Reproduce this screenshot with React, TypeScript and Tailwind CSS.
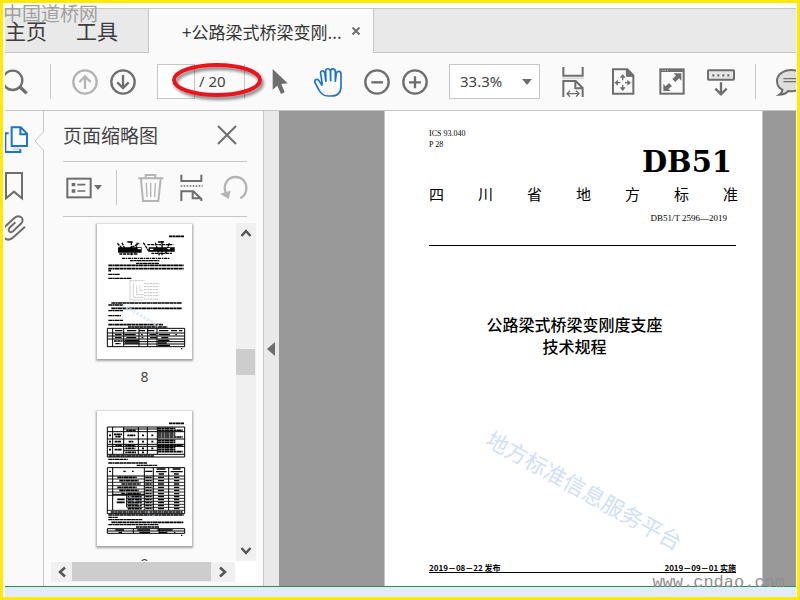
import type { ReactNode } from "react";

type IconProps = { box: string; className: string; children: ReactNode; stroke?: string };

function Icon({ box, className, children, stroke = "#6e6e6e" }: IconProps) {
  return (
    <svg viewBox={box} className={`block shrink-0 ${className}`} fill="none" stroke={stroke} strokeWidth={7} aria-hidden="true">
      {children}
    </svg>
  );
}

function ToolButton({ label, className = "", children }: { label: string; className?: string; children: ReactNode }) {
  return (
    <button type="button" aria-label={label} className={`shrink-0 ${className}`}>
      {children}
    </button>
  );
}

function TabBar() {
  return (
    <nav className="flex h-[45px] shrink-0 border-t border-[#c6c6c6] bg-[#e9e9e9] leading-none">
      <div className="flex w-36 shrink-0 gap-[29px] overflow-hidden whitespace-nowrap border-r border-b border-[#c6c6c6] text-[21px] text-[#3c3c3c]">
        <button type="button">主页</button>
        <button type="button">工具</button>
      </div>
      <div className="flex w-56 shrink-0 items-center justify-between bg-[#fafafa] pr-3 pl-[33px] text-[#333]">
        <button type="button" className="whitespace-nowrap text-[17px]">+公路梁式桥梁变刚...</button>
        <ToolButton label="关闭标签">
          <Icon box="0 0 10 10" className="size-[10px]">
            <path d="M1.5 1.5 8.500 8.500M8.500 1.500 1.500 8.500" strokeWidth={2} />
          </Icon>
        </ToolButton>
      </div>
      <div className="flex-1 border-b border-l border-[#c6c6c6]" />
    </nav>
  );
}

function Divider({ className = "" }: { className?: string }) {
  return <span className={`h-[35px] w-px shrink-0 bg-[#c6c6c6] ${className}`} />;
}

function Toolbar() {
  return (
    <div className="flex h-[58px] shrink-0 items-center overflow-hidden border-b border-[#c6c6c6] bg-[#fafafa]">
      <ToolButton label="查找">
        <Icon box="15 204 72 78" className="h-[26px] w-6">
          <circle cx="38" cy="238" r="29" />
          <path d="M60 258 80 277" strokeWidth={10} />
        </Icon>
      </ToolButton>
      <Divider className="ml-[21px]" />
      <ToolButton label="上一页" className="ml-[21px]">
        <Icon box="216 204 78 78" className="size-[26px]" stroke="#b4b4b4">
          <circle cx="255" cy="243" r="35" />
          <path d="M255 264V227M238 243 255 226 272 243" />
        </Icon>
      </ToolButton>
      <ToolButton label="下一页" className="ml-3">
        <Icon box="330 204 78 78" className="size-[26px]">
          <circle cx="369" cy="243" r="35" />
          <path d="M369 222V260M352 244 369 261 386 244" />
        </Icon>
      </ToolButton>
      <div className="relative ml-[21px] flex w-[88px] shrink-0 items-center border-r border-[#c6c6c6]">
        <input id="page-number" aria-label="页码" className="h-[35px] w-[38px] border border-[#c6c6c6] bg-white text-center outline-none" />
        <label htmlFor="page-number" className="ml-1 font-['Noto_Sans','Open_Sans',sans-serif] text-[15px] whitespace-nowrap text-[#444]">
          / 20
        </label>
        <svg viewBox="0 0 100 42" className="pointer-events-none absolute -top-1 left-3 h-[42px] w-[100px]" fill="none" aria-hidden="true">
          <defs>
            <filter id="ring-shadow" x="-10%" y="-20%" width="125%" height="160%">
              <feDropShadow dx="2" dy="3" stdDeviation="1.500" floodColor="#000" floodOpacity="0.450" />
            </filter>
          </defs>
          <ellipse cx="48" cy="20" rx="43" ry="15" stroke="#e8191f" strokeWidth="4" filter="url(#ring-shadow)" />
        </svg>
      </div>
      <ToolButton label="选择" className="ml-[27px]">
        <Icon box="36 204 48 78" className="h-[26px] w-4">
          <path d="M38 204 83 247 64 249 74 274 63 279 52 254 38 266Z" fill="#6e6e6e" stroke="none" />
        </Icon>
      </ToolButton>
      <ToolButton label="手形工具" className="ml-[26px]">
        <Icon box="162 198 84 90" className="h-[30px] w-7" stroke="#1f74c9">
          <path
            d="M187 251 182 218C180 208 192 207 194 216L198 243M198 240 197 210C197 201 210 201 211 210L212 241M212 239V210C213 201 225 202 226 211L226 243M226 240 229 217C231 208 243 210 243 219V255C243 274 233 285 215 285H205C188 285 182 277 177 267L165 245C162 236 172 231 177 239L187 254"
            strokeWidth={5}
            strokeLinejoin="round"
          />
        </Icon>
      </ToolButton>
      <ToolButton label="缩小" className="ml-[22px]">
        <Icon box="311 202 78 78" className="size-[26px]">
          <circle cx="350" cy="241" r="35" />
          <path d="M333 242H368" />
        </Icon>
      </ToolButton>
      <ToolButton label="放大" className="ml-3">
        <Icon box="425 202 78 78" className="size-[26px]">
          <circle cx="464" cy="241" r="35" />
          <path d="M446 242H482M464 224V260" />
        </Icon>
      </ToolButton>
      <div className="relative ml-[21px] shrink-0">
        <select aria-label="缩放比例" className="block h-[35px] w-[91px] appearance-none border border-[#c6c6c6] bg-white pl-[10px] font-['Noto_Sans','Open_Sans',sans-serif] text-[15px] text-[#444] outline-none">
          <option>33.3%</option>
        </select>
        <svg viewBox="0 0 10 6" className="pointer-events-none absolute top-[15px] right-2 h-[6px] w-[10px]" aria-hidden="true">
          <path d="M0 0H10L5 6Z" fill="#6e6e6e" />
        </svg>
      </div>
      <ToolButton label="适合宽度" className="ml-[19px]">
        <Icon box="88 198 84 90" className="h-[30px] w-7">
          <path d="M97 232H163" stroke="#d8d8d8" strokeWidth={5} />
          <path d="M101 198V224H159V198M101 288V240H138L159 261V288M137 240V262H159" strokeWidth={6} />
          <path d="M113 278H147M121 269 112 278 121 287M139 269 148 278 139 287" strokeWidth={4} />
        </Icon>
      </ToolButton>
      <ToolButton label="适合页面" className="ml-[22px]">
        <Icon box="237 198 84 90" className="h-[30px] w-7">
          <path d="M249 205H292L310 223V278H249Z" strokeWidth={6} />
          <path d="M289 205V226H310Z" fill="#6e6e6e" strokeWidth={3} />
          <path d="M278 224V238M278 251V266M258 245H271M285 245H299" strokeWidth={4} />
          <path d="M278 219 287 230H269ZM278 270 287 259H269ZM253 245 264 236V254ZM303 245 292 236V254Z" fill="#6e6e6e" stroke="none" />
        </Icon>
      </ToolButton>
      <ToolButton label="全屏模式" className="ml-[21px]">
        <Icon box="384 198 84 90" className="h-[30px] w-7">
          <rect x="391" y="205" width="70" height="73" strokeWidth={6} />
          <path d="M391 209H461" strokeWidth={8} />
          <path d="M397 208H415" stroke="#ccc" strokeWidth={3} strokeDasharray="3 4" />
          <path d="M454 217V239L447 232 436 243 427 234 438 224 431 217ZM400 270V249L407 256 417 246 426 255 415 264 422 270Z" fill="#6e6e6e" stroke="none" />
        </Icon>
      </ToolButton>
      <ToolButton label="显示键盘" className="ml-[21px]">
        <Icon box="531 198 84 90" className="h-[30px] w-7">
          <rect x="534" y="208" width="78" height="28" rx="2" strokeWidth={6} fill="#e6e6e6" />
          <path d="M547 223H600" strokeDasharray="6 9" strokeWidth={7} />
          <path d="M573 244V278M556 263 573 280 590 263" />
        </Icon>
      </ToolButton>
      <Divider className="ml-5" />
      <ToolButton label="注释" className="ml-5">
        <Icon box="738 198 63 90" className="h-[30px] w-[21px]">
          <path d="M785 207C758 207 741 222 741 240C741 252 747 261 757 266C757 273 753 278 748 281C760 281 769 277 775 270C805 274 828 260 828 240C828 220 808 207 785 207Z" fill="#dedede" strokeWidth={6} />
          <path d="M760 233H800M760 242H800" strokeWidth={4} />
        </Icon>
      </ToolButton>
    </div>
  );
}

function Rail() {
  return (
    <aside className="relative flex w-[39px] shrink-0 flex-col items-start border-r border-[#c6c6c6] bg-[#fafafa] pt-3">
      <ToolButton label="页面缩略图">
        <Icon box="15 40 72 96" className="h-8 w-6" stroke="#1f74c9">
          <path d="M38 113H58V122H38Z" fill="#c9dff3" stroke="none" />
          <path d="M35 53H62L81 72V109H35ZM61 53V74H81M15 71H26M16 71V127H61V118" strokeWidth={6} />
        </Icon>
      </ToolButton>
      <ToolButton label="书签" className="mt-4">
        <Icon box="15 180 72 90" className="h-[30px] w-6">
          <path d="M18 186H66V262L42 242 18 262Z" strokeWidth={6} />
        </Icon>
      </ToolButton>
      <ToolButton label="附件" className="mt-[14px]">
        <Icon box="15 165 72 84" className="h-7 w-6">
          <path d="M13 202 43 174C57 161 76 176 64 190L39 214C30 221 22 211 29 203L46 187M75 200 41 231C31 241 20 240 12 233" strokeWidth={6} />
        </Icon>
      </ToolButton>
      <svg viewBox="0 0 10 20" className="absolute top-5 -right-px h-5 w-[10px]" aria-hidden="true">
        <path d="M10 0 1 10 10 20" fill="#fafafa" stroke="#c6c6c6" />
      </svg>
    </aside>
  );
}

function Line({ x, y, w, dash = "11 1 7 1 14 1", h = 5, color = "#000" }: { x: number; y: number; w: number; dash?: string; h?: number; color?: string }) {
  return <path d={`M${x} ${y}H${x + w}`} stroke={color} strokeWidth={h} strokeDasharray={dash} />;
}

function ThumbEight() {
  return (
    <svg viewBox="21 12 285 405" className="block h-[135px] w-[95px]" fill="none" aria-hidden="true">
      <Line x={237} y={49} w={45} />
      <path d="M84 82H155V98H84ZM176 82H254V95H176Z" fill="#000" />
      <path d="M82 70 96 84M96 68 110 98M124 66V106M142 68 134 104M106 92 148 70M160 68 178 96M172 74H250M196 68 208 106M216 64V106M238 70 226 102M184 100H246M88 102H144" stroke="#000" strokeWidth={4} strokeDasharray="9 2" />
      <path d="M112 66H128M204 66H222" stroke="#000" strokeWidth={4} />
      <path d="M143 86H153M180 88H190M232 86H240" stroke="#fff" strokeWidth={4} />
      <Line x={96} y={115} w={142} dash="9 2 5 2" h={4} />
      <Line x={120} y={122} w={88} h={4} />
      <Line x={138} y={130} w={70} h={4} />
      <Line x={55} y={136} w={226} />
      <Line x={55} y={146} w={226} />
      <Line x={55} y={152} w={8} />
      <Line x={55} y={163} w={34} h={4} />
      <Line x={55} y={175} w={70} h={4} />
      <path d="M120 184V240H160M130 190V232H160M140 196V224H160M150 196V212H160" stroke="#bbb" strokeWidth={2} />
      {[182, 191, 200, 209, 218, 227, 237].map((y, i) => (
        <Line key={y} x={i ? 162 : 118} y={y} w={46} h={3} color="#c4c4c4" dash="8 2 5 2" />
      ))}
      <Line x={64} y={249} w={212} />
      <Line x={55} y={255} w={44} h={4} />
      <Line x={64} y={265} w={212} />
      <Line x={55} y={272} w={44} h={4} />
      <Line x={55} y={287} w={38} h={4} />
      <Line x={55} y={301} w={44} h={4} />
      <Line x={55} y={314} w={164} />
      <Line x={114} y={321} w={118} h={4} />
      <path d="M98 255 206 318" stroke="#d4e4f8" strokeWidth={9} strokeDasharray="8 4" opacity={0.7} />
      <path d="M52 325H284V380H52ZM68 325V380M101 325V380M147 325V380M173 325V380M201 325V380M52 339H284M52 348H284M52 357H284M101 365H284M101 372H284" stroke="#000" strokeWidth={3} />
      <Line x={75} y={332} w={202} h={4} dash="22 14 28 8 18 6" />
      <Line x={75} y={344} w={190} h={4} dash="20 8 34 16 5 20" />
      <Line x={75} y={353} w={160} h={4} dash="20 14 30 16 5 20" />
      <Line x={72} y={363} w={26} h={4} />
      <Line x={76} y={371} w={16} h={4} />
      <path d="M104 361H146M104 369H146M204 361H238M204 369H230M204 376H240" stroke="#000" strokeWidth={4} />
      <Line x={273} y={386} w={4} h={4} />
    </svg>
  );
}

function ThumbNine() {
  const rows = [217, 227, 237, 247, 256, 266, 275, 284, 293, 302, 311];
  return (
    <svg viewBox="21 18 285 405" className="block h-[135px] w-[95px]" fill="none" aria-hidden="true">
      <Line x={237} y={55} w={45} />
      <path d="M52 66H284V156H52ZM68 66V148M101 66V148M145 66V148M172 66V148M202 66V148M101 72H202M52 80H284M52 102H284M52 118H284M52 124H284M101 136H202M52 148H284" stroke="#000" strokeWidth={3} />
      <path d="M109 76H138M72 88H96M76 95H92M112 91H136M156 91H162M184 91H190M57 91H63M74 110H94M116 110H130M156 110H162M184 110H190M57 110H63M76 121H96M106 121H136M74 134H96M106 130H136M106 142H138M156 130H162M184 130H190M156 142H162M57 134H63" stroke="#000" strokeWidth={5} strokeDasharray="7 1 11 1" />
      {[70, 76, 84, 90, 96, 106, 112, 121, 128, 134, 140].map((y, i) => (
        <Line key={y} x={204} y={y} w={i % 3 === 1 ? 74 : 52} h={5} />
      ))}
      <Line x={56} y={153} w={136} h={5} />
      <Line x={55} y={163} w={58} h={4} />
      <Line x={55} y={174} w={116} />
      <Line x={140} y={181} w={62} h={4} />
      <path d="M52 188H284V326H52ZM68 188V316M163 188V316M190 188V316M236 188V316M52 213H284M110 268V306M68 268H163" stroke="#000" strokeWidth={3} />
      <path d="M100 199H107M126 199H131M166 199H187M57 199H63M200 192H226M198 200H230M206 207H222M248 192H272M242 200H278M252 207H266" stroke="#000" strokeWidth={4} />
      {rows.map((y, i) => (
        <g key={y}>
          <path d={`M${i > 5 && i < 10 ? 110 : 52} ${y + 5}H284`} stroke="#000" strokeWidth={2.5} />
          <Line x={i > 5 ? 113 : 82 + (i % 3) * 6} y={y} w={i > 5 ? 42 : 58} h={5} />
          <Line x={166} y={y} w={21} h={4} />
          <path d={`M204 ${y}H222M252 ${y}H268`} stroke="#000" strokeWidth={4} />
        </g>
      ))}
      <path d="M82 283H104M80 292H104" stroke="#000" strokeWidth={5} />
      <Line x={62} y={321} w={216} h={5} />
      <Line x={55} y={330} w={226} />
      <Line x={55} y={337} w={28} h={4} />
      <Line x={55} y={344} w={102} h={4} />
      <Line x={64} y={352} w={216} />
      <Line x={55} y={359} w={150} h={4} />
      <Line x={138} y={366} w={70} h={4} />
      <path d="M104 262 210 350" stroke="#c5daf8" strokeWidth={5} strokeDasharray="6 12" opacity={0.7} />
      <path d="M52 371H284V385H52ZM130 371V385M208 371V385M52 378H284" stroke="#000" strokeWidth={3} />
      <Line x={76} y={375} w={190} h={4} dash="26 40 38 22 46 20" />
      <Line x={86} y={382} w={170} h={4} dash="10 52 32 26 26 20" />
      <Line x={273} y={391} w={4} h={4} />
    </svg>
  );
}

function Thumb({ page, children }: { page: string; children: ReactNode }) {
  return (
    <li className="flex flex-col items-center">
      <button type="button" aria-label={`第 ${page} 页`} className="bg-white shadow-[0_1px_2px_1px_rgba(0,0,0,0.35)]">
        {children}
      </button>
      <span className="mt-2 mb-6 font-['Noto_Sans','Open_Sans',sans-serif] text-sm leading-5 text-[#444]">{page}</span>
    </li>
  );
}

function Chevron({ d }: { d: string }) {
  return (
    <Icon box="0 0 12 12" className="size-3" stroke="#555">
      <path d={d} strokeWidth={2.5} />
    </Icon>
  );
}

function ThumbnailPanel() {
  return (
    <section className="flex w-[220px] shrink-0 flex-col border-r border-[#c6c6c6] bg-[#fafafa]">
      <header className="mr-4 ml-[19px] flex h-[51px] shrink-0 items-center justify-between border-b border-[#c6c6c6] pr-[10px] pb-[2px]">
        <h2 className="text-[19px] leading-6 text-[#444]">页面缩略图</h2>
        <ToolButton label="关闭面板">
          <Icon box="0 0 20 20" className="size-5">
            <path d="M1 1 19 19M19 1 1 19" strokeWidth={2} />
          </Icon>
        </ToolButton>
      </header>
      <div className="mr-4 ml-[19px] flex h-[55px] shrink-0 items-center border-b border-[#c6c6c6] pb-[3px] pl-[3px]">
        <ToolButton label="选项" className="flex items-center gap-[2px]">
          <Icon box="198 194 78 78" className="size-[26px]">
            <rect x="202" y="205" width="70" height="56" strokeWidth={6} />
            <path d="M215 223H226M215 242H226" strokeWidth={10} />
            <path d="M232 223H256M232 242H256" strokeWidth={5} />
          </Icon>
          <Icon box="0 0 8 5" className="h-[5px] w-2">
            <path d="M0 0H8L4 5Z" fill="#6e6e6e" stroke="none" />
          </Icon>
        </ToolButton>
        <Divider className="ml-[14px]" />
        <ToolButton label="删除页面" className="ml-[21px]">
          <Icon box="414 189 78 84" className="h-7 w-[26px]" stroke="#b4b4b4">
            <path d="M415 202H490M437 200V192H466V200M423 204 429 270H475L482 204" strokeWidth={6} />
            <path d="M439 216 441 258M452 216V258M466 216 464 258" strokeWidth={4} />
          </Icon>
        </ToolButton>
        <ToolButton label="插入页面" className="ml-4">
          <Icon box="540 191 69 84" className="h-7 w-[23px]">
            <path d="M544 193V212H604V193M544 272V243H580L604 266V272M578 243V264H604" strokeWidth={6} />
            <path d="M542 227H608" strokeWidth={5} strokeDasharray="5 4" />
          </Icon>
        </ToolButton>
        <ToolButton label="旋转页面" className="ml-[17px]">
          <Icon box="660 191 84 84" className="size-7" stroke="#b4b4b4">
            <path d="M677 248C668 222 684 200 706 200C728 200 740 216 739 236C738 250 732 258 721 264" />
            <path d="M660 250 692 241 686 266Z" fill="#b4b4b4" stroke="none" />
          </Icon>
        </ToolButton>
      </div>
      <div className="flex min-h-0 flex-1 pr-[7px]">
        <ul className="ml-[9px] flex min-w-0 flex-1 flex-col overflow-hidden pt-[7px]">
          <Thumb page="8">
            <ThumbEight />
          </Thumb>
          <Thumb page="9">
            <ThumbNine />
          </Thumb>
        </ul>
        <div className="mt-[6px] flex w-5 shrink-0 flex-col bg-[#f0f0f0]">
          <button type="button" aria-label="向上滚动" className="flex h-5 w-full items-center justify-center">
            <Chevron d="M1.500 9 6 4 10.500 9" />
          </button>
          <div className="flex-[106]" />
          <div className="h-[26px] w-[19px] bg-[#cdcdcd]" />
          <div className="flex-[165]" />
          <button type="button" aria-label="向下滚动" className="flex h-5 w-full items-center justify-center">
            <Chevron d="M1.500 3 6 8 10.500 3" />
          </button>
        </div>
      </div>
      <div className="mr-[7px] mb-1 ml-[7px] flex h-[21px] shrink-0 bg-white">
        <div className="mt-px flex flex-1 bg-[#f0f0f0]">
          <button type="button" aria-label="向左滚动" className="flex w-[21px] items-center justify-center">
            <Chevron d="M9 1.500 4 6 9 10.500" />
          </button>
          <div className="mb-px flex-1 bg-[#cdcdcd]" />
          <button type="button" aria-label="向右滚动" className="flex w-6 items-center justify-center">
            <Chevron d="M3 1.500 8 6 3 10.500" />
          </button>
        </div>
        <div className="w-[21px]" />
      </div>
    </section>
  );
}

function DocumentPage() {
  return (
    <main className="flex min-w-0 flex-1 bg-[#999] pr-[33px] pl-[105px]">
      <article className="relative flex flex-1 flex-col overflow-hidden border-r border-l border-[#c6c6c6] bg-white pr-[26px] pl-11 text-black">
        <div className="pt-[17px] font-['Liberation_Serif',serif] text-[8px] leading-[11px]">
          <p>ICS 93.040</p>
          <p>P 28</p>
        </div>
        <p className="pr-1 text-right font-['DejaVu_Serif',serif] text-[29px] leading-6 font-bold">DB51</p>
        <h1 className="mt-[7px] -mr-[2px] text-[15px] leading-[26px] [text-align-last:justify]">四 川 省 地 方 标 准</h1>
        <p className="pr-[9px] text-right font-['Liberation_Serif',serif] text-[9px] leading-[22px]">DB51/T 2596—2019</p>
        <hr className="mt-4 border-black" />
        <h2 className="mt-[67px] pr-4 text-center text-base leading-[22px] font-medium">
          公路梁式桥梁变刚度支座
          <br />
          技术规程
        </h2>
        <p className="absolute top-[364px] left-[88px] w-[224px] rotate-[29deg] whitespace-nowrap text-center text-[22px] leading-7 text-[#cfe0f8]">
          地方标准信息服务平台
        </p>
        <div className="mt-auto mb-[13px] flex h-[11px] justify-between border-b border-black text-[8px] leading-3 font-bold whitespace-nowrap">
          <span>2019－08－22 发布</span>
          <span>2019－09－01 实施</span>
        </div>
      </article>
    </main>
  );
}

export default function App() {
  return (
    <div className="relative flex h-screen w-full flex-col overflow-hidden border-[3px] border-[#ffe80a] bg-white pt-[5px] pr-px pl-[2px] font-['Noto_Sans_CJK_SC',sans-serif]">
      <TabBar />
      <Toolbar />
      <div className="flex min-h-0 flex-1">
        <Rail />
        <ThumbnailPanel />
        <button type="button" aria-label="折叠面板" className="flex w-[15px] shrink-0 items-center bg-[#e9e9e9] pl-[3px]">
          <Icon box="0 0 8 14" className="h-[14px] w-2">
            <path d="M8 0V14L0 7Z" fill="#6e6e6e" stroke="none" />
          </Icon>
        </button>
        <DocumentPage />
      </div>
      <footer className="h-[11px] shrink-0 border-t border-[#1f9550] bg-[#e3eaf8]" />
      <p className="absolute top-0 left-0 text-[19px] leading-5 whitespace-nowrap text-[#a0a0a0]">中国道桥网</p>
      <p className="absolute right-3 bottom-1 font-['Liberation_Mono',monospace] text-[17px] leading-5 text-[#8f8f8f]">www.cndao.com</p>
    </div>
  );
}
